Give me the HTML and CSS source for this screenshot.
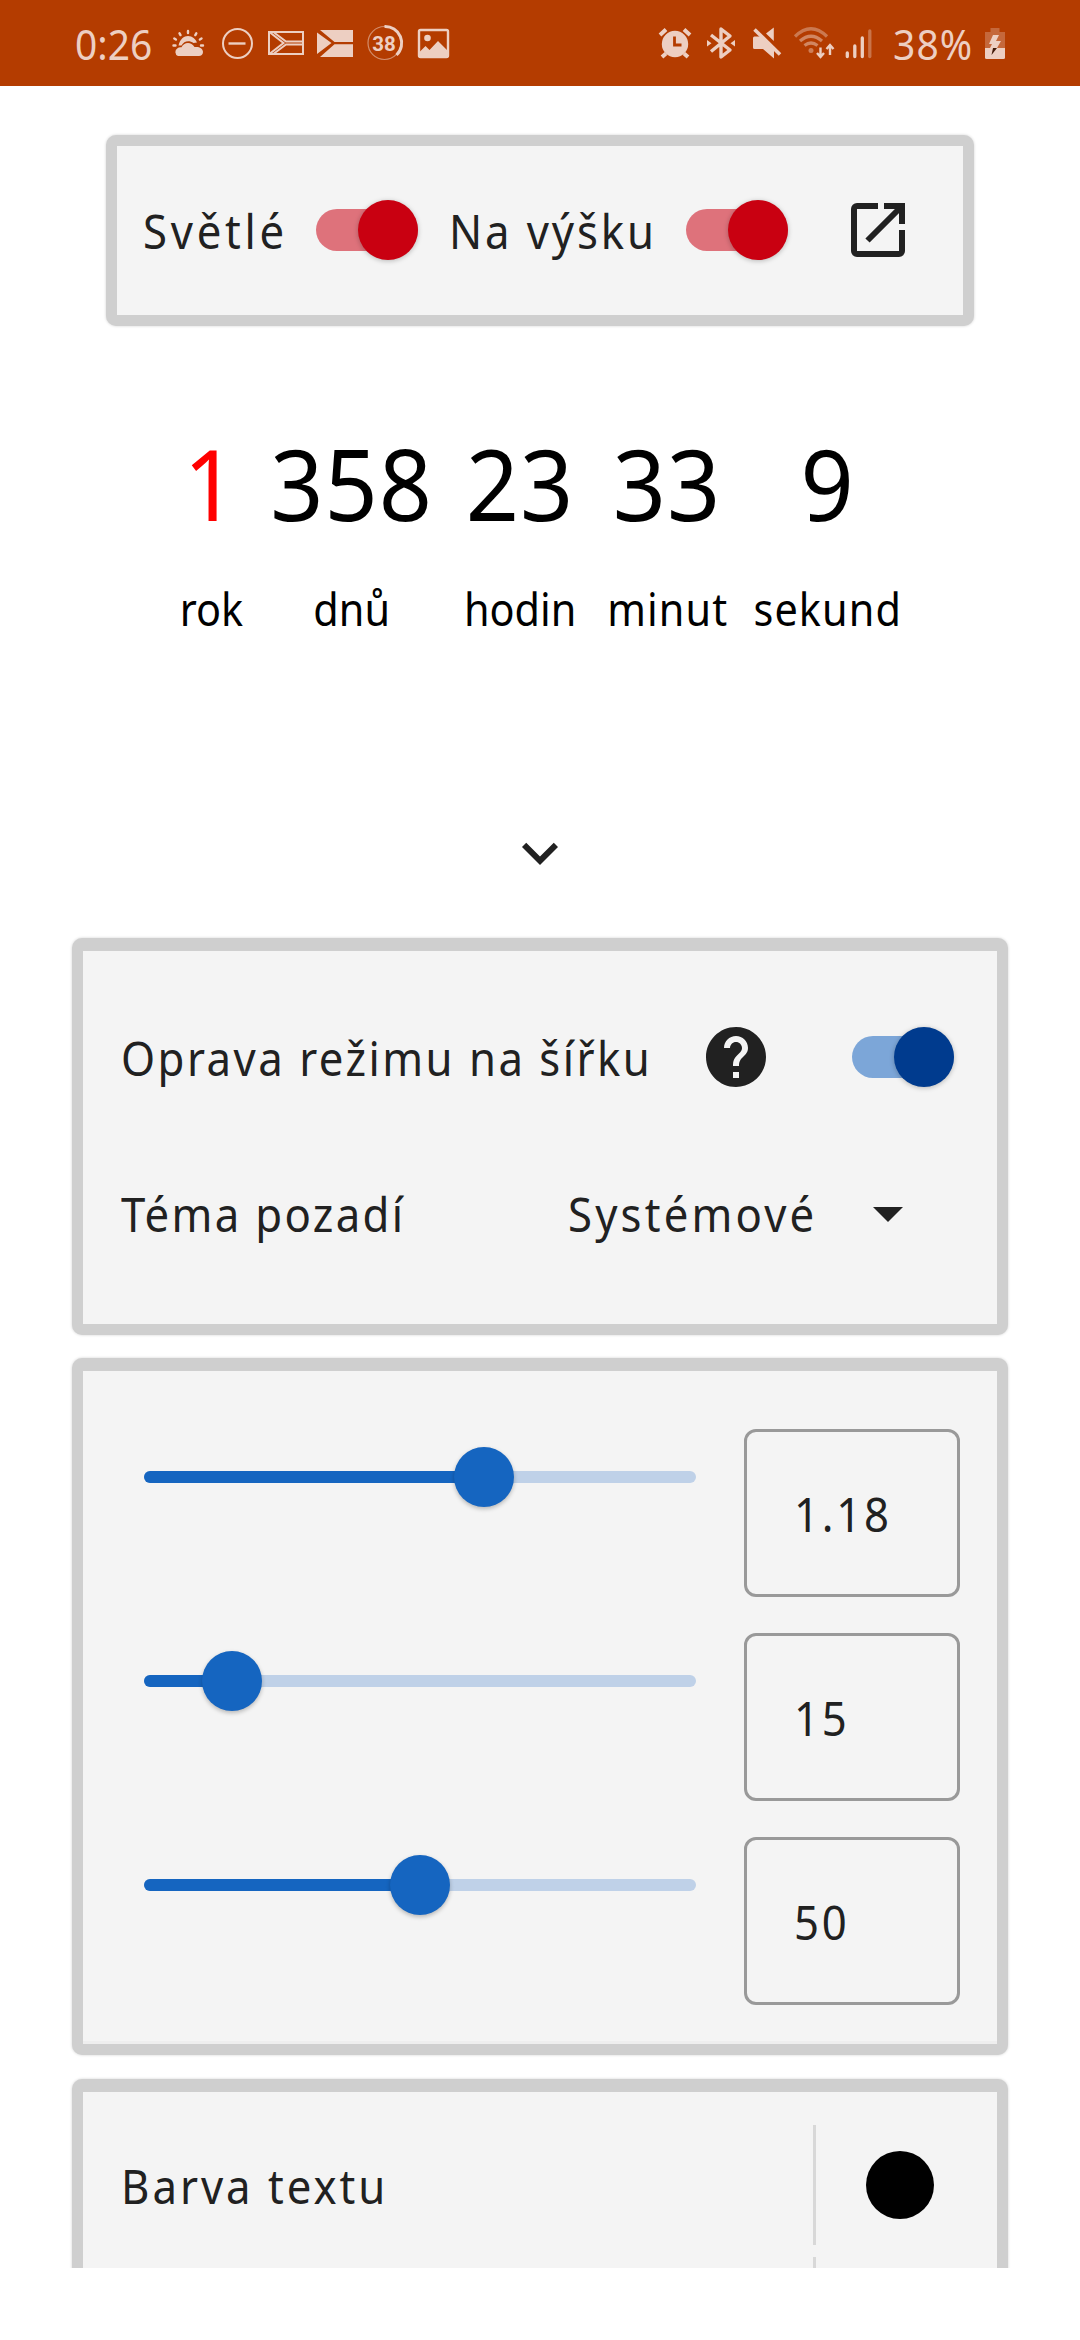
FILE: index.html
```
<!DOCTYPE html>
<html lang="cs">
<head>
<meta charset="utf-8">
<title>Odpočet</title>
<link rel="stylesheet" href="styles.css">
</head>
<body>
<div class="screen">
  <header class="status">
    <div class="status-left">
      <span class="clock">0:26</span>
      <svg class="si weather" width="32" height="86" viewBox="172 0 32 86">
        <g fill="none" stroke-width="2.4" stroke-linecap="round"><path d="M188 31v2M179.500 33.300l1 1.800M196.300 33.300l-1 1.800M174.300 38.500l1.600 1M201.500 38.500l-1.600 1M173.500 45.500h2M201 45.500h2"/></g>
        <path class="f" d="M178.500 45.500C180 39 184 36 188 36c4.500 0 7.500 3 9 6.500l-3.500.5c-4-3-9.500-2.500-12 2.500z"/>
        <path class="f" d="M178 56a4.300 4.300 0 0 1-.5-7.700c1-1 2.500-1.300 4-1 2-5 9.500-6.500 13-.2 4-.8 8.500 1 8.500 5 0 2.500-2 3.900-4 3.900z"/>
      </svg>
      <svg class="si minus" width="32" height="86" viewBox="222 0 32 86"><circle cx="237.500" cy="43.500" r="14.500" fill="none" stroke-width="2"/><path d="M228.500 43.500h17" stroke-width="2.400"/></svg>
      <svg class="si flag" width="36" height="86" viewBox="268 0 36 86"><path d="M269 32h34v22h-34zM270 32.500l13.500 10.500L270 53.500M274 32.500L286 41.500h17M274 53.500L286 44.500h17" fill="none" stroke-width="2"/></svg>
      <svg class="si flag2" width="36" height="86" viewBox="317 0 36 86"><path class="f" d="M320 30h33v12h-18.500zM320 57h33V44.300h-18.500zM317 32.500L331.500 43 317 54z"/></svg>
      <svg class="si ring" width="36" height="86" viewBox="367 0 36 86"><circle cx="384.500" cy="43" r="16.500" fill="none" stroke-width="1.200" opacity=".55"/><path d="M384.500 26.500A16.500 16.500 0 0 1 396.500 55" fill="none" stroke-width="3"/><text x="384" y="50.500" text-anchor="middle" class="ringtext">38</text></svg>
      <svg class="si photo" width="32" height="86" viewBox="418 0 32 86"><rect x="419" y="30" width="29" height="27" rx="1.500" fill="none" stroke-width="2.400"/><circle class="f" cx="427.500" cy="38" r="3.300"/><path class="f" d="M420 51.500l5.500-5.500 4 4 8.500-9 10 10v6h-28z"/></svg>
    </div>
    <div class="status-right">
      <svg class="si" width="34" height="86" viewBox="658 0 34 86"><circle class="f" cx="675" cy="44" r="13.200"/><path d="M660 35l6-5.500M690 35l-6-5.500M666 53.500l-4 3.500M684 53.500l4 3.500" stroke-width="4"/><path class="cut" d="M674.500 36.500v8.500h7" fill="none" stroke-width="2.800"/></svg>
      <svg class="si bt" width="28" height="86" viewBox="707 0 28 86"><path d="M711 35l19 15-9 7V29l9 7-19 15.500" fill="none" stroke-width="3.400" stroke-linejoin="round"/><path class="f" d="M707 40l4.500 3.300-4.500 3.300zM735 40l-4.500 3.300 4.500 3.300z"/></svg>
      <svg class="si mute" width="29" height="86" viewBox="753 0 29 86"><path class="f" d="M753 38q0-1.500 1.500-1.500h6.500l13 13V58.500l-11-9.500h-8.500q-1.500 0-1.500-1.500zM766 33.500l7.800-6V41z"/><path d="M754.500 29.500l25.500 25" stroke-width="3.600"/></svg>
      <svg class="si wifi" width="41" height="86" viewBox="794 0 41 86"><g fill="none" stroke-width="3.200" opacity=".42"><path d="M795 36.500q16-15.500 32 0"/></g><g fill="none" stroke-width="3.200" opacity=".5"><path d="M800 41q11-9.500 22 0M804.500 45.500q6.500-5 13 0"/></g><circle class="f" cx="811" cy="50.500" r="2.500" opacity=".45"/><path d="M820.500 47.500v9M817 53l3.500 4 3.500-4M830 55v-9M826.500 49l3.500-4 3.500 4" fill="none" stroke-width="2.400"/></svg>
      <svg class="si signal" width="28" height="86" viewBox="845 0 28 86"><g stroke-width="3.300" stroke-linecap="round"><path d="M847.300 53v3.500M854.800 46v10.500M862.300 38v18.500"/><path d="M869.800 31v25.500" opacity=".38"/></g></svg>
      <span class="percent">38%</span>
      <svg class="si battery" width="20" height="86" viewBox="985 0 20 86"><path class="f" d="M990.500 28h9v4h5.500v16h-20V32h5.500z" opacity=".3"/><path class="f" d="M985 48h20v9.500q0 1.500-1.500 1.500h-17q-1.500 0-1.500-1.500z"/><path class="f" d="M993 35h6l-3 6h5l-4 7h-7l2-4h-3z"/><path class="f bolt" d="M993 48h4l-5.500 7z"/></svg>
    </div>
  </header>

  <main>
    <section class="card toolbar">
      <span class="txt t-svetle">Světlé</span>
      <span class="switch red"><i></i></span>
      <span class="txt t-vysku">Na výšku</span>
      <span class="switch red"><i></i></span>
      <svg class="open" width="54" height="54" viewBox="0 0 54 54"><path d="M27 3H6a3 3 0 0 0-3 3v42a3 3 0 0 0 3 3h42a3 3 0 0 0 3-3V27M33 3h18v18M51 3L16.500 37.500"/></svg>
    </section>

    <section class="countdown">
      <div><b class="first">1</b><span>rok</span></div>
      <div><b>358</b><span>dnů</span></div>
      <div><b>23</b><span>hodin</span></div>
      <div><b>33</b><span class="wide">minut</span></div>
      <div><b>9</b><span class="wide">sekund</span></div>
    </section>

    <svg class="chevron" width="72" height="72" viewBox="0 0 24 24"><path d="M16.590 8.590L12 13.170 7.410 8.590 6 10l6 6 6-6z"/></svg>

    <section class="card options">
      <div class="row">
        <span class="txt t-oprava">Oprava režimu na šířku</span>
        <svg class="help" width="60" height="60" viewBox="2 2 20 20"><path d="M12 2C6.480 2 2 6.480 2 12s4.480 10 10 10 10-4.480 10-10S17.520 2 12 2zm1 17h-2v-2h2v2zm2.070-7.750l-.9.920C13.450 12.900 13 13.500 13 15h-2v-.5c0-1.100.45-2.100 1.170-2.830l1.240-1.260c.37-.36.590-.86.590-1.410 0-1.100-.9-2-2-2s-2 .9-2 2H8c0-2.210 1.790-4 4-4s4 1.790 4 4c0 .88-.36 1.680-.93 2.250z"/></svg>
        <span class="switch blue"><i></i></span>
      </div>
      <div class="row">
        <span class="txt t-tema">Téma pozadí</span>
        <span class="txt t-system">Systémové</span>
        <svg class="drop" width="30" height="15" viewBox="0 0 30 15"><path d="M0 0h30L15 15z"/></svg>
      </div>
    </section>

    <section class="card sliders">
      <div class="srow"><div class="slider"><div class="fill" style="width:340px"></div></div><div class="field"><span class="txt num">1.18</span></div></div>
      <div class="srow"><div class="slider"><div class="fill" style="width:88px"></div></div><div class="field"><span class="txt num">15</span></div></div>
      <div class="srow"><div class="slider"><div class="fill" style="width:276px"></div></div><div class="field"><span class="txt num">50</span></div></div>
    </section>

    <section class="card colors">
      <div class="crow"><span class="txt t-barva">Barva textu</span><div class="pick"><i class="swatch"></i></div></div>
      <div class="crow"><span></span><div class="pick"></div></div>
    </section>
  </main>
</div>
</body>
</html>
```
FILE: styles.css
```
* { box-sizing: border-box; }
body { margin: 0; background: #fff; font-family: "Noto Sans", sans-serif; color: #212121; }
.screen { width: 1080px; height: 2340px; overflow: hidden; background: #fff; }
svg { display: block; flex: none; }

.status { height: 86px; background: #b43c00; color: #edcfc2; display: flex; justify-content: space-between; padding: 0 75px; }
.status-left, .status-right { display: flex; }
.clock, .percent { font-size: 41px; line-height: 88px; white-space: nowrap; flex: none; transform: scaleX(.95); transform-origin: 0 50%; }
.clock { width: 97px; }
.percent { width: 92px; margin-left: 20px; letter-spacing: 1.200px; }
.si { stroke: #edcfc2; fill: #edcfc2; overflow: visible; }
.f { stroke: none; }
.cut { stroke: #b43c00; }
.bolt { fill: #431a08; }
.minus { margin-left: 18px; }
.flag { margin-left: 14px; }
.flag2 { margin-left: 13px; }
.ring { margin-left: 14px; }
.photo { margin-left: 15px; }
.ringtext { font: 700 20.500px "Roboto", sans-serif; stroke: none; }
.bt { margin-left: 15px; }
.mute { margin-left: 18px; }
.wifi { margin-left: 12px; }
.signal { margin-left: 10px; }

main { height: 2182px; overflow: hidden; padding-top: 49px; display: flex; flex-direction: column; align-items: center; }

.card { flex: none; width: 936px; background: #f4f4f4; border: 11px solid #cfcfcf; border-radius: 10px; box-shadow: 0 0 3px #d2d2d2; }
.txt { font-size: 47px; line-height: 64px; white-space: nowrap; flex: none; transform: scaleX(.93); transform-origin: 0 50%; }

.toolbar { width: 868px; height: 191px; display: flex; align-items: center; padding: 0 0 1px 26px; }
.toolbar .txt { padding-top: 2px; }
.t-svetle { width: 173px; letter-spacing: 4px; }
.t-vysku { width: 237px; margin-left: 31px; letter-spacing: 3.100px; }
.switch { flex: none; width: 102px; height: 42px; border-radius: 21px; display: flex; align-items: center; justify-content: flex-end; }
.switch i { width: 60px; height: 60px; flex: none; border-radius: 50%; box-shadow: 0 1px 5px rgba(0, 0, 0, .25); }
.red { background: #de727b; }
.red i { background: #c90011; }
.blue { background: #7ca6d8; }
.blue i { background: #003b8e; }
.open { margin-left: 63px; fill: none; stroke: #212121; stroke-width: 6; }

.countdown { flex: none; align-self: stretch; margin-top: 97px; padding-left: 165px; display: grid; grid-template-columns: 92px 190px 147px 147px 174px; color: #000; }
.countdown div { display: flex; flex-direction: column; align-items: center; gap: 36px; }
.countdown b { font-weight: 400; font-size: 98px; line-height: 120px; letter-spacing: 1px; transform: scaleX(.95); }
.countdown .first { color: #f00; }
.countdown span { font-size: 45px; line-height: 60px; transform: scaleX(.92); }
.countdown .wide { letter-spacing: 1.200px; }

.chevron { margin-top: 178px; fill: #212121; }

.options { margin-top: 49px; height: 397px; border-top-width: 13px; padding: 28px 0 0 38px; }
.row { height: 156px; display: flex; align-items: center; }
.row .txt { padding-top: 2px; }
.t-oprava { width: 585px; letter-spacing: 2.660px; }
.help { fill: #212121; }
.row .switch { margin-left: 86px; }
.t-tema { width: 447px; letter-spacing: 2.500px; }
.t-system { width: 305px; letter-spacing: 3.400px; }
.drop { fill: #212121; margin-top: 2px; }

.sliders { margin-top: 23px; height: 697px; border-top-width: 13px; padding: 58px 37px 0 61px; display: flex; flex-direction: column; gap: 36px; box-shadow: 0 0 3px #d2d2d2, inset 0 -3px #eee; }
.srow { display: flex; justify-content: space-between; }
.slider { width: 552px; height: 12px; margin-top: 42px; border-radius: 6px; background: #bfd1e8; }
.fill { height: 12px; border-radius: 6px; background: #1565c0; display: flex; align-items: center; justify-content: flex-end; }
.fill::after { content: ""; flex: none; width: 60px; height: 60px; margin-right: -30px; border-radius: 50%; background: #1565c0; box-shadow: 0 2px 4px rgba(0, 0, 0, .25); }
.field { width: 216px; height: 168px; border: 3px solid #999; border-radius: 12px; display: flex; align-items: center; padding: 2px 0 0 47px; }
.num { letter-spacing: 3px; }

.colors { margin-top: 24px; height: 300px; border-top-width: 13px; padding: 33px 37px 0 38px; display: flex; flex-direction: column; gap: 12px; }
.crow { flex: none; height: 120px; display: flex; align-items: center; justify-content: space-between; }
.t-barva { letter-spacing: 3.200px; padding-top: 2px; }
.pick { width: 147px; height: 120px; border-left: 3px solid #d8d8d8; display: flex; align-items: center; padding-left: 50px; }
.swatch { width: 68px; height: 68px; border-radius: 50%; background: #000; }
```
